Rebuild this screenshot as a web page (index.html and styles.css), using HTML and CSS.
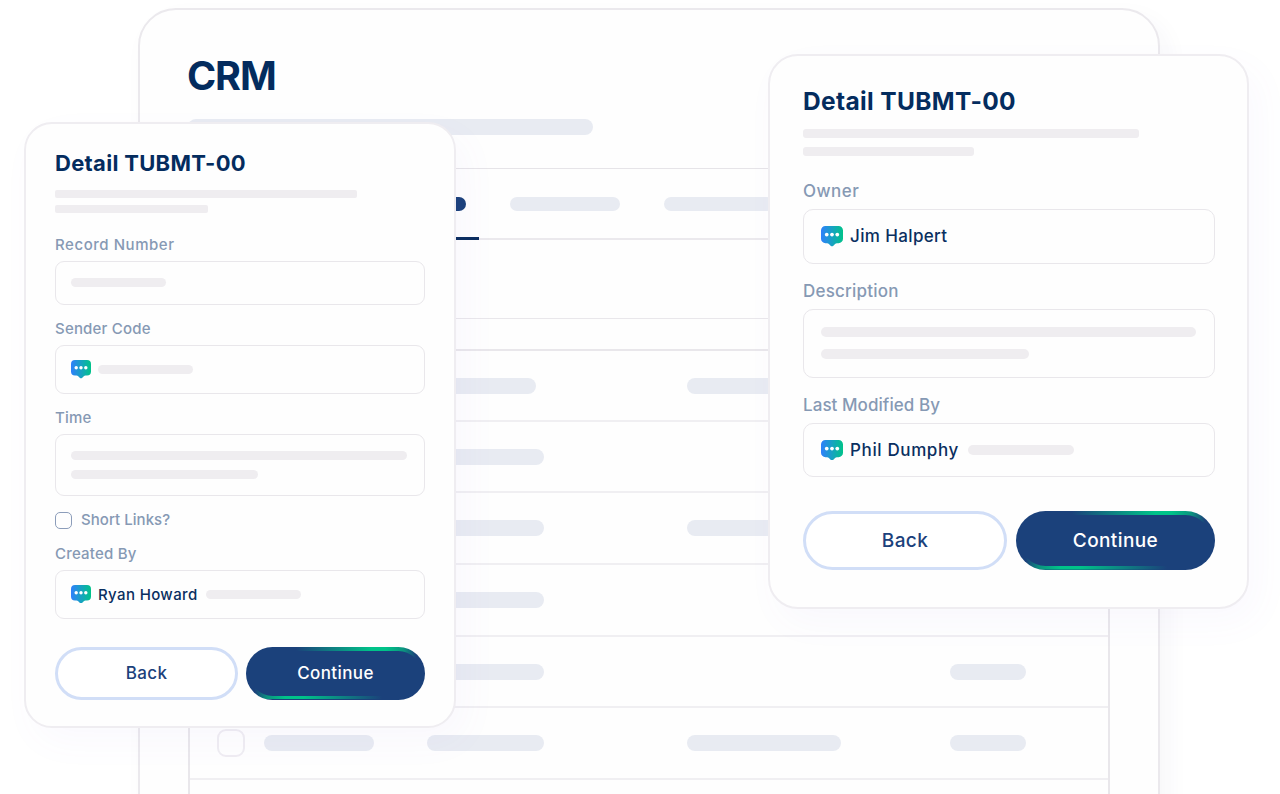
FILE: index.html
```html
<!DOCTYPE html>
<html lang="en">

<head>
    <meta charset="UTF-8">
    <meta name="viewport" content="width=device-width, initial-scale=1.0">
    <title>CRM</title>
    <link rel="stylesheet" href="styles.css">
</head>

<body>
    <!-- shared chat icon -->
    <svg class="defs" width="0" height="0" aria-hidden="true">
        <linearGradient id="chat-fill" x1="0" y1="0" x2="1" y2="0">
            <stop offset="0" stop-color="#2f80fc" />
            <stop offset="1" stop-color="#00c389" />
        </linearGradient>
        <symbol id="chat" viewBox="0 0 20 18.500">
            <path fill="url(#chat-fill)" d="M4 0h12a4 4 0 0 1 4 4v7.500a4 4 0 0 1-4 4h-1.500q-1 0-1.700.7l-1.800 1.800a1.400 1.400 0 0 1-2 0L7.200 16.200q-.7-.7-1.700-.7H4a4 4 0 0 1-4-4V4a4 4 0 0 1 4-4z" />
            <g fill="#fff">
                <circle cx="5.200" cy="7.700" r="1.700" />
                <circle cx="10" cy="7.700" r="1.700" />
                <circle cx="14.800" cy="7.700" r="1.700" />
            </g>
        </symbol>
    </svg>

    <main class="stage">
        <section class="window">
            <h1>CRM</h1>
            <div class="pill subtitle"></div>

            <nav class="tabs">
                <div class="tab active"><span class="pill"></span></div>
                <div class="tab"><span class="pill"></span></div>
                <div class="tab"><span class="pill"></span></div>
            </nav>

            <div class="table">
                <div class="table-head"></div>
                <div class="row">
                    <span class="check"></span><span class="pill c1"></span><span class="pill c2 short"></span><span class="pill c3"></span>
                </div>
                <div class="row">
                    <span class="check"></span><span class="pill c1"></span><span class="pill c2"></span>
                </div>
                <div class="row">
                    <span class="check"></span><span class="pill c1"></span><span class="pill c2"></span><span class="pill c3"></span>
                </div>
                <div class="row tall">
                    <span class="check"></span><span class="pill c1"></span><span class="pill c2"></span>
                </div>
                <div class="row">
                    <span class="check"></span><span class="pill c1"></span><span class="pill c2"></span><span class="pill c4"></span>
                </div>
                <div class="row">
                    <span class="check"></span><span class="pill c1"></span><span class="pill c2"></span><span class="pill c3"></span><span class="pill c4"></span>
                </div>
            </div>
        </section>

        <!-- left card -->
        <form class="card card-left">
            <h2>Detail TUBMT-00</h2>
            <div class="line w-302"></div>
            <div class="line w-153"></div>

            <div class="label record">Record Number</div>
            <div class="field f-small"><span class="bar"></span></div>

            <div class="label sender">Sender Code</div>
            <div class="field"><svg class="chat"><use href="#chat" /></svg><span class="bar"></span></div>

            <div class="label">Time</div>
            <div class="field f-area"><span class="bar long"></span><span class="bar half"></span></div>

            <div class="checkbox"><span class="box"></span><span class="label short-links">Short Links?</span></div>

            <div class="label created">Created By</div>
            <div class="field"><svg class="chat"><use href="#chat" /></svg><span class="name">Ryan Howard</span><span class="bar"></span></div>

            <div class="actions">
                <button type="button" class="btn back">Back</button>
                <button type="button" class="btn continue">Continue</button>
            </div>
        </form>

        <!-- right card -->
        <form class="card card-right">
            <h2>Detail TUBMT-00</h2>
            <div class="line w-336"></div>
            <div class="line w-171"></div>

            <div class="label owner">Owner</div>
            <div class="field"><svg class="chat"><use href="#chat" /></svg><span class="name">Jim Halpert</span></div>

            <div class="label">Description</div>
            <div class="field f-area"><span class="bar long"></span><span class="bar half"></span></div>

            <div class="label modified">Last Modified By</div>
            <div class="field"><svg class="chat"><use href="#chat" /></svg><span class="name phil">Phil Dumphy</span><span class="bar"></span></div>

            <div class="actions">
                <button type="button" class="btn back">Back</button>
                <button type="button" class="btn continue">Continue</button>
            </div>
        </form>
    </main>
</body>

</html>
```

FILE: styles.css
```css
* {
    box-sizing: border-box;
}

body {
    font-family: Inter, "Liberation Sans", sans-serif;
    background-color: #fff;
    margin: 0;
    padding: 0;
}

.defs {
    position: absolute;
}

.stage {
    position: relative;
    height: 794px;
    overflow: hidden;
}

/* background window */
.window {
    width: 1022px;
    height: 860px;
    margin: 8px 0 0 138px;
    padding: 0 48px;
    border: 2px solid #ebe9ed;
    border-radius: 38px;
    background-color: #fefefe;
    box-shadow: 8px 10px 24px rgba(60, 60, 90, 0.04);
    display: flow-root;
}

h1 {
    margin: 41px 0 0 -1px;
    height: 50px;
    line-height: 50px;
    font-size: 39.500px;
    font-weight: 650;
    letter-spacing: -1.100px;
    color: #042c5e;
}

.pill {
    display: block;
    height: 16px;
    border-radius: 8px;
    background-color: #e8ebf2;
}

.subtitle {
    width: 405px;
    margin-top: 18px;
}

.tabs {
    display: flex;
    height: 72px;
    margin-top: 33px;
    border-top: 1px solid #e6e4e8;
    border-bottom: 2px solid #ebe9ed;
}

.tab {
    width: 154px;
    height: 71px;
    padding: 28px 12px 0;
}

.tab .pill {
    width: 110px;
    height: 14px;
}

.tab.active {
    border-bottom: 3px solid #0b2e5f;
    width: 137px;
    margin-left: 154px;
    margin-right: 19px;
}

.tab.active .pill {
    background-color: #1b417b;
    width: 112px;
}

.table {
    margin-top: 78px;
    height: 600px;
    border: 2px solid #e9e7eb;
    border-top-width: 1px;
}

.table-head {
    height: 32px;
    border-bottom: 2px solid #e9e7eb;
}

.row {
    display: grid;
    grid-template-columns: 47px 163px 260px 263px 1fr;
    align-items: center;
    height: 71.200px;
    padding-left: 27px;
    border-bottom: 2px solid #f0eff2;
}

.row.tall {
    height: 72.600px;
}

.check {
    width: 28px;
    height: 28px;
    border: 2px solid #efedf2;
    border-radius: 9px;
}

.c1 {
    width: 110px;
}

.c2 {
    width: 117px;
}

.c2.short {
    width: 109px;
}

.c3 {
    width: 154px;
}

.c4 {
    width: 76px;
    grid-column: 5;
}

/* cards */
.card {
    position: absolute;
    background-color: #fefefe;
    border: 2px solid #efedf1;
    box-shadow: 10px 14px 36px rgba(120, 90, 220, 0.04);
    display: flex;
    flex-direction: column;
}

.card-left {
    left: 24px;
    top: 122px;
    width: 432px;
    height: 606px;
    padding: 26px 29px 0;
    border-radius: 28px;
}

.card-right {
    left: 768px;
    top: 54px;
    width: 481px;
    height: 555px;
    padding: 30px 32px 0 33px;
    border-radius: 30px;
}

h2 {
    margin: 0;
    font-weight: 700;
    color: #042c5e;
    white-space: nowrap;
}

.card-left h2 {
    height: 40px;
    line-height: 26px;
    font-size: 22px;
    letter-spacing: 0.300px;
}

.card-right h2 {
    height: 43px;
    line-height: 30px;
    font-size: 24.500px;
    letter-spacing: 0.360px;
}

.line {
    height: 8px;
    margin-bottom: 7px;
    border-radius: 2px;
    background-color: #efedf0;
    flex: none;
}

.card-right .line {
    height: 9px;
    margin-bottom: 8.500px;
    border-radius: 3px;
}

.w-302 {
    width: 302px;
}

.w-153 {
    width: 153px;
}

.w-336 {
    width: 336px;
}

.w-171 {
    width: 171px;
}

.label {
    margin: 14px 0 6px;
    height: 20px;
    line-height: 20px;
    font-size: 15px;
    font-weight: 500;
    letter-spacing: 0.200px;
    color: #8699b4;
    white-space: nowrap;
}

.label.record {
    margin-top: 15px;
    letter-spacing: 0.550px;
}

.label.short-links {
    letter-spacing: 0.050px;
}

.label.created {
    margin: 13.500px 0 6px;
}

.card-right .label {
    margin: 16px 0 7px;
    height: 22px;
    line-height: 22px;
    font-size: 17px;
}

.card-right .label.owner {
    letter-spacing: 0.450px;
}

.card-right .label.modified {
    letter-spacing: 0.060px;
}

.field {
    display: flex;
    align-items: center;
    flex: none;
    height: 49px;
    padding: 0 15px;
    border: 1.500px solid #e9e7eb;
    border-radius: 9px;
}

.card-right .field {
    height: 54.500px;
    padding: 0 17px;
    border-radius: 10px;
}

.card-left .f-small {
    height: 44px;
    padding-bottom: 2px;
}

.card-left .f-area {
    flex-direction: column;
    align-items: flex-start;
    height: 62px;
    padding-top: 16px;
    gap: 10px;
}

.card-right .f-area {
    flex-direction: column;
    align-items: flex-start;
    height: 69px;
    padding-top: 17px;
    gap: 12px;
}

.bar {
    width: 95px;
    height: 9px;
    border-radius: 5px;
    background-color: #efedf0;
}

.card-right .bar {
    width: 106px;
    height: 10px;
}

.card-left .long {
    width: 336px;
}

.card-left .half {
    width: 187px;
}

.card-right .long {
    width: 375px;
}

.card-right .half {
    width: 208px;
}

.chat {
    width: 20px;
    height: 18.500px;
    margin-right: 7px;
}

.card-right .chat {
    width: 22px;
    height: 20.500px;
}

.name {
    font-size: 15px;
    font-weight: 500;
    letter-spacing: 0.370px;
    color: #0a2f60;
    margin-right: 8px;
    white-space: nowrap;
}

.card-right .name {
    font-size: 17px;
    margin-right: 9px;
}

.card-right .phil {
    letter-spacing: 0.630px;
}

.checkbox {
    display: flex;
    align-items: center;
    height: 20px;
    margin-top: 14px;
}

.box {
    width: 17px;
    height: 17px;
    margin-right: 9px;
    border: 1.500px solid #8c9dba;
    border-radius: 5px;
}

.checkbox .label {
    margin: 0;
}

.actions {
    display: flex;
    gap: 8px;
    margin-top: 28px;
}

.card-right .actions {
    gap: 9px;
    margin-top: 34px;
}

.btn {
    height: 53px;
    padding: 0 0 1px;
    border-radius: 30px;
    font-family: inherit;
    font-size: 17px;
    font-weight: 500;
    letter-spacing: 0.400px;
}

.card-right .btn {
    height: 59px;
    font-size: 19px;
}

.back {
    width: 183px;
    border: 3px solid #d1def7;
    background-color: #fff;
    color: #1b417b;
}

.card-right .back {
    width: 204px;
}

/* navy fill, green glow on the top and bottom edge */
.continue {
    flex: 1;
    border: 4px solid transparent;
    color: #fff;
    background:
        linear-gradient(#1b417b, #1b417b) padding-box,
        linear-gradient(90deg, #1b417b 28%, #00c389 70%, #00c389 78%, #0b957f 88%, #1b417b 95%) top / 100% 40% no-repeat border-box,
        linear-gradient(90deg, #1b417b 5%, #0b957f 12%, #00c389 22%, #00c389 32%, #1b417b 76%) bottom / 100% 40% no-repeat border-box,
        linear-gradient(#1b417b, #1b417b) border-box;
}
```
